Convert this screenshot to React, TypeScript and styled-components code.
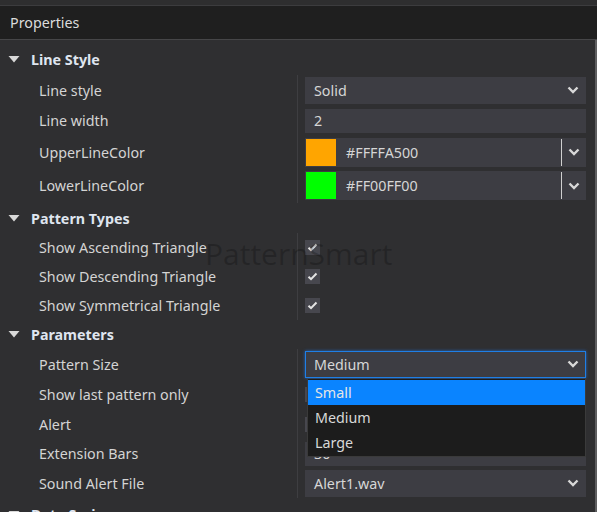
import React from 'react';
import styled, { createGlobalStyle } from 'styled-components';

const GlobalStyle = createGlobalStyle`
  html, body {
    margin: 0;
    padding: 0;
    background: #2f2f31;
  }
  body {
    font-family: "Noto Sans", "Open Sans", sans-serif;
    font-size: 14.3px;
    color: #d6d6d6;
  }
`;

type Row =
  | { kind: 'select'; label: string; value: string; h: number; focused?: boolean }
  | { kind: 'input'; label: string; value: string; h: number }
  | { kind: 'color'; label: string; value: string; swatch: string; h: number }
  | { kind: 'check'; label: string; h: number };

const groups: { title: string; h: number; rows: Row[] }[] = [
  {
    title: 'Line Style',
    h: 31,
    rows: [
      { kind: 'select', label: 'Line style', value: 'Solid', h: 30 },
      { kind: 'input', label: 'Line width', value: '2', h: 31 },
      { kind: 'color', label: 'UpperLineColor', value: '#FFFFA500', swatch: '#FFA500', h: 32 },
      { kind: 'color', label: 'LowerLineColor', value: '#FF00FF00', swatch: '#00FF00', h: 35 },
    ],
  },
  {
    title: 'Pattern Types',
    h: 30,
    rows: [
      { kind: 'check', label: 'Show Ascending Triangle', h: 29 },
      { kind: 'check', label: 'Show Descending Triangle', h: 29 },
      { kind: 'check', label: 'Show Symmetrical Triangle', h: 29 },
    ],
  },
  {
    title: 'Parameters',
    h: 29,
    rows: [
      { kind: 'select', label: 'Pattern Size', value: 'Medium', h: 30, focused: true },
      { kind: 'check', label: 'Show last pattern only', h: 31 },
      { kind: 'check', label: 'Alert', h: 29 },
      { kind: 'input', label: 'Extension Bars', value: '30', h: 29 },
      { kind: 'select', label: 'Sound Alert File', value: 'Alert1.wav', h: 30 },
    ],
  },
  { title: 'Data Series', h: 32, rows: [] },
];

const sizeOptions = ['Small', 'Medium', 'Large'];

const Chevron = () => (
  <svg width="12" height="8" viewBox="0 0 12 8">
    <path d="M1.5 1.5 L6 6 L10.5 1.5" fill="none" stroke="#d8d8d8" strokeWidth="2.4" />
  </svg>
);

const Tick = () => (
  <svg width="11" height="9" viewBox="0 0 11 9">
    <path d="M1.5 4.8 L4 7.2 L9.5 1.5" fill="none" stroke="#e4e4e4" strokeWidth="2" />
  </svg>
);

const Caret = () => (
  <svg width="12" height="7" viewBox="0 0 12 7">
    <path d="M0.5 0 L11.5 0 L6 6.5 Z" fill="#d8d8d8" />
  </svg>
);

const Control = ({ row }: { row: Row }) => {
  switch (row.kind) {
    case 'select':
      return (
        <SelectBox $focused={row.focused}>
          <span>{row.value}</span>
          <Chevron />
        </SelectBox>
      );
    case 'input':
      return <InputBox>{row.value}</InputBox>;
    case 'color':
      return (
        <ColorBox>
          <Swatch $color={row.swatch} />
          <ColorText>{row.value}</ColorText>
          <ColorArrow>
            <Chevron />
          </ColorArrow>
        </ColorBox>
      );
    case 'check':
      return (
        <CheckBox>
          <Tick />
        </CheckBox>
      );
    default:
      return null;
  }
};

export default function App() {
  return (
    <>
      <GlobalStyle />
      <Window>
        <TopStrip />
        <Header>Properties</Header>
        <Body>
          <Content>
            {groups.map((g) => (
              <Group key={g.title}>
                <SectionRow $h={g.h}>
                  <Caret />
                  <span>{g.title}</span>
                </SectionRow>
                {g.rows.length > 0 && (
                  <PropList>
                    {g.rows.map((r) => (
                      <PropRow key={r.label} $h={r.h}>
                        <Label>{r.label}</Label>
                        <Value>
                          <Control row={r} />
                        </Value>
                      </PropRow>
                    ))}
                  </PropList>
                )}
              </Group>
            ))}
            <Watermark>PatternSmart</Watermark>
            <DropList>
              {sizeOptions.map((o, i) => (
                <DropItem key={o} $active={i === 0}>
                  {o}
                </DropItem>
              ))}
            </DropList>
          </Content>
          <ScrollTrack>
            <ScrollThumb />
          </ScrollTrack>
        </Body>
      </Window>
    </>
  );
}

// Styling
const Window = styled.div`
  width: 597px;
  height: 512px;
  overflow: hidden;
  display: flex;
  flex-direction: column;
  background: #2f2f31;
`;

const TopStrip = styled.div`
  height: 5px;
  background: #2e2e2f;
  border-bottom: 1px solid #3c3c3e;
`;

const Header = styled.div`
  height: 33px;
  display: flex;
  align-items: center;
  padding-left: 10px;
  background: #1f1f1f;
  border-bottom: 1px solid #464648;
  color: #dcdcdc;
`;

const Body = styled.div`
  flex: 1;
  display: flex;
  min-height: 0;
`;

const Content = styled.div`
  position: relative;
  flex: 1;
  padding-top: 4px;
`;

const ScrollTrack = styled.div`
  width: 2px;
  background: #2f2f31;
`;

const ScrollThumb = styled.div`
  height: 100%;
  background: #5e5e60;
`;

const Group = styled.div`
  display: flex;
  flex-direction: column;
`;

const SectionRow = styled.div<{ $h: number }>`
  height: ${(p) => p.$h}px;
  display: flex;
  align-items: center;
  gap: 11px;
  padding-left: 8px;
  font-weight: 700;
  color: #dfe5ef;
`;

const PropList = styled.div`
  display: flex;
  flex-direction: column;
`;

const PropRow = styled.div<{ $h: number }>`
  height: ${(p) => p.$h}px;
  display: grid;
  grid-template-columns: 298px 1fr;
`;

const Label = styled.div`
  display: flex;
  align-items: center;
  padding-left: 39px;
  border-right: 1px solid #3e3e41;
  color: #d4d4d4;
`;

const Value = styled.div`
  display: flex;
  align-items: center;
  padding: 0 9px 0 7px;
`;

const SelectBox = styled.div<{ $focused?: boolean }>`
  flex: 1;
  height: 27px;
  box-sizing: border-box;
  display: flex;
  align-items: center;
  justify-content: space-between;
  padding: 0 6px 0 8px;
  background: #3d3d43;
  color: #d6d6d6;
  border: 1px solid ${(p) => (p.$focused ? '#1f7fe6' : 'transparent')};
  box-shadow: ${(p) => (p.$focused ? '0 0 3px rgba(30, 128, 255, 0.7)' : 'none')};
`;

const InputBox = styled.div`
  flex: 1;
  height: 24px;
  display: flex;
  align-items: center;
  padding-left: 9px;
  background: #3d3d43;
  color: #d6d6d6;
`;

const ColorBox = styled.div`
  flex: 1;
  height: 29px;
  box-sizing: border-box;
  display: flex;
  align-items: center;
  padding: 1px;
  background: #3d3d43;
`;

const Swatch = styled.div<{ $color: string }>`
  width: 30px;
  align-self: stretch;
  background: ${(p) => p.$color};
`;

const ColorText = styled.div`
  flex: 1;
  padding-left: 10px;
  color: #d6d6d6;
`;

const ColorArrow = styled.div`
  align-self: stretch;
  width: 23px;
  display: flex;
  align-items: center;
  justify-content: center;
  border-left: 1px solid #d0d0d0;
`;

const CheckBox = styled.div`
  width: 15px;
  height: 15px;
  display: flex;
  align-items: center;
  justify-content: center;
  background: #47474e;
`;

const Watermark = styled.div`
  position: absolute;
  left: 205px;
  top: 193px;
  font-family: "Open Sans", sans-serif;
  font-size: 30px;
  color: rgba(0, 0, 0, 0.22);
  pointer-events: none;
`;

const DropList = styled.div`
  position: absolute;
  left: 307px;
  top: 339px;
  width: 279px;
  box-sizing: border-box;
  padding: 1px 0;
  background: #1c1c1c;
  border: 1px solid #3a3a3a;
  border-top: none;
`;

const DropItem = styled.div<{ $active?: boolean }>`
  height: 25px;
  display: flex;
  align-items: center;
  padding-left: 7px;
  background: ${(p) => (p.$active ? '#0a84ff' : 'transparent')};
  color: ${(p) => (p.$active ? '#e6e6e6' : '#d8d8d8')};
`;
